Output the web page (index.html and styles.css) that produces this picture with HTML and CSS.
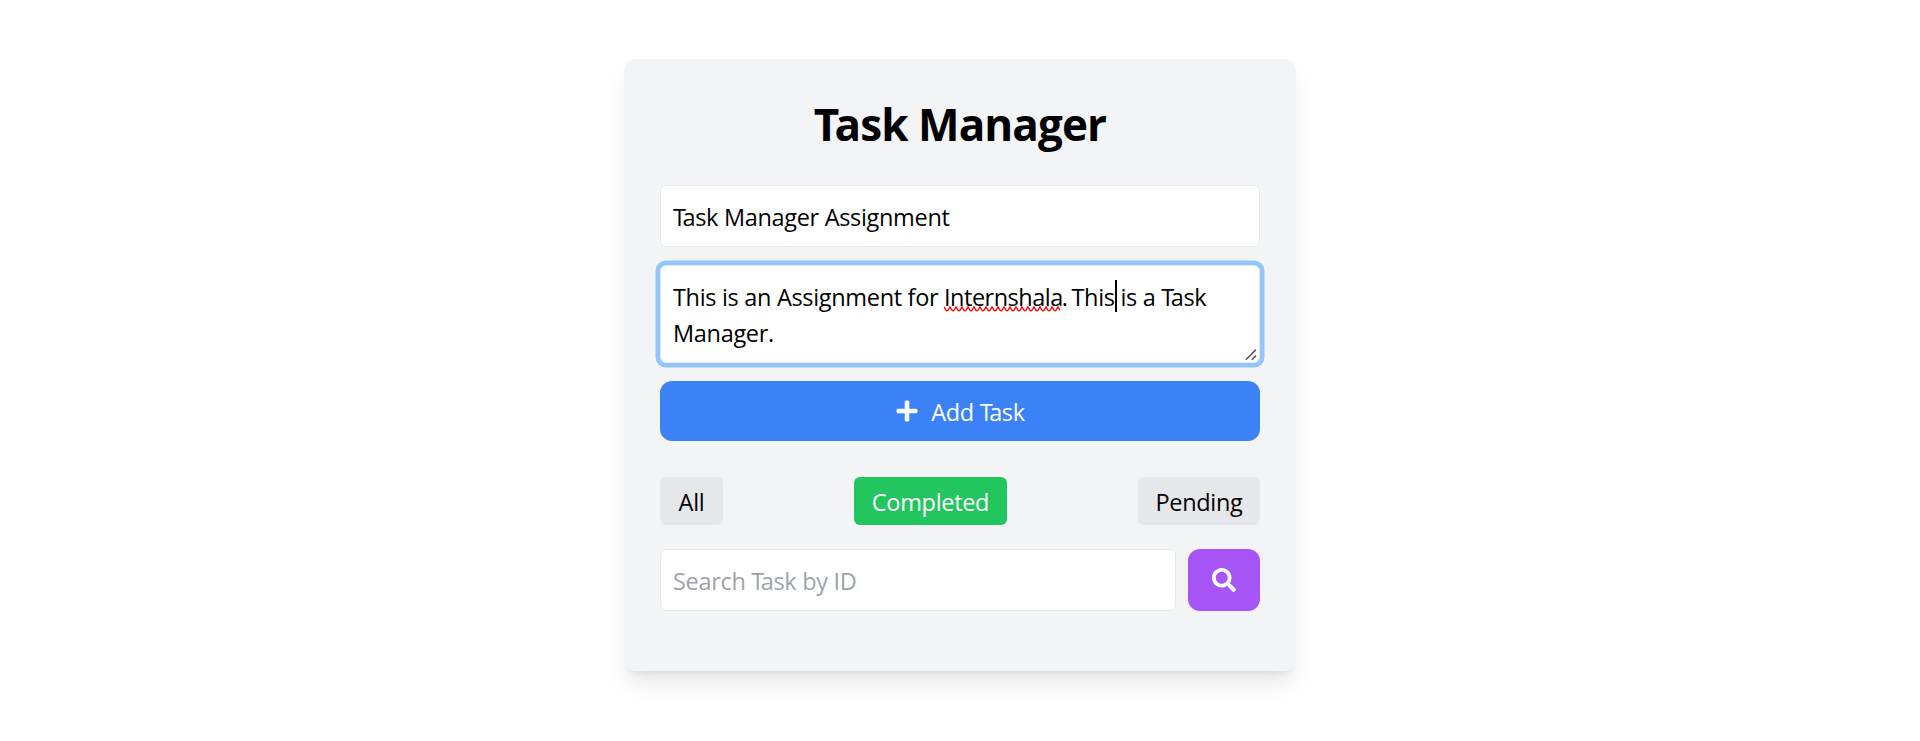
FILE: index.html
```html
<!DOCTYPE html>
<html lang="en">
<head>
<meta charset="utf-8">
<title>Task Manager</title>
<link rel="stylesheet" href="styles.css">
</head>
<body>
<main class="card">
  <h1 class="title"><span class="word">Task</span> Manager</h1>
  <div class="field name-field"><span class="word">Task</span> Manager Assignment</div>
  <div class="field description">
    <div class="line"><span>This is an Assignment for </span><span class="misspelled">Internshala<svg class="squiggle" width="117" height="6" viewBox="0 0 117 6"><path d="M0 .9L2 4.3Q3 5.3 4 4.3L6 .9L8 4.3Q9 5.3 10 4.3L12 .9L14 4.3Q15 5.3 16 4.3L18 .9L20 4.3Q21 5.3 22 4.3L24 .9L26 4.3Q27 5.3 28 4.3L30 .9L32 4.3Q33 5.3 34 4.3L36 .9L38 4.3Q39 5.3 40 4.3L42 .9L44 4.3Q45 5.3 46 4.3L48 .9L50 4.3Q51 5.3 52 4.3L54 .9L56 4.3Q57 5.3 58 4.3L60 .9L62 4.3Q63 5.3 64 4.3L66 .9L68 4.3Q69 5.3 70 4.3L72 .9L74 4.3Q75 5.3 76 4.3L78 .9L80 4.3Q81 5.3 82 4.3L84 .9L86 4.3Q87 5.3 88 4.3L90 .9L92 4.3Q93 5.3 94 4.3L96 .9L98 4.3Q99 5.3 100 4.3L102 .9L104 4.3Q105 5.3 106 4.3L108 .9L110 4.3Q111 5.3 112 4.3L114 .9L116 4.3" fill="none" stroke="#f00" stroke-width="1.3"/></svg></span><span class="sentence">. This</span><span class="caret"></span><span> is a <span class="word">Task</span></span></div>
    <div class="line">Manager.</div>
    <svg class="grip" width="12" height="12" viewBox="0 0 12 12"><path d="M.8 10.8L11 .6M6.8 10.8L11 6.6" fill="none" stroke="#555" stroke-width="1.5"/></svg>
  </div>
  <button class="add">
    <svg class="icon" viewBox="0 0 448 512"><path d="M416 208H272V64c0-17.67-14.33-32-32-32h-32c-17.67 0-32 14.33-32 32v144H32c-17.67 0-32 14.33-32 32v32c0 17.67 14.33 32 32 32h144v144c0 17.67 14.33 32 32 32h32c17.67 0 32-14.33 32-32V304h144c17.67 0 32-14.33 32-32v-32c0-17.67-14.33-32-32-32z"/></svg>
    <span class="add-label">Add <span class="word">Task</span></span>
  </button>
  <div class="filters">
    <button class="filter all">All</button>
    <button class="filter completed">Completed</button>
    <button class="filter pending">Pending</button>
  </div>
  <div class="search">
    <div class="field search-field">Search <span class="word">Task</span> by ID</div>
    <button class="search-button" aria-label="Search">
      <svg class="icon" viewBox="0 0 512 512"><path d="M505 442.7L405.3 343c-4.5-4.5-10.6-7-17-7H372c27.6-35.3 44-79.7 44-128C416 93.1 322.9 0 208 0S0 93.1 0 208s93.1 208 208 208c48.3 0 92.7-16.4 128-44v16.3c0 6.4 2.5 12.5 7 17l99.7 99.7c9.4 9.4 24.6 9.4 33.9 0l28.3-28.3c9.4-9.4 9.4-24.6.1-34zM208 336c-70.7 0-128-57.2-128-128 0-70.7 57.2-128 128-128 70.7 0 128 57.2 128 128 0 70.7-57.2 128-128 128z"/></svg>
    </button>
  </div>
</main>
</body>
</html>
```
FILE: styles.css
```css
* { box-sizing: border-box; }
body {
  margin: 0;
  height: 741px;
  padding-top: 59px;
  background: #fff;
  color: #000;
  font: 23.5px/36px "Open Sans", "Noto Sans", sans-serif;
  letter-spacing: -0.32px;
}
button {
  border: 0;
  margin: 0;
  color: inherit;
  font: inherit;
  letter-spacing: inherit;
}
.card {
  width: 672px;
  height: 612px;
  margin: 0 auto;
  padding: 36px;
  border-radius: 12px;
  background: #f3f4f6;
  box-shadow: 0 15px 22.5px -4.5px rgba(0, 0, 0, .1), 0 6px 9px -6px rgba(0, 0, 0, .1);
}
.title {
  height: 54px;
  margin: 0 0 36px;
  padding-top: 2px;
  font-size: 44px;
  line-height: 54px;
  font-weight: 700;
  letter-spacing: -0.9px;
  text-align: center;
}
.word { display: inline-block; }
.word::first-letter { letter-spacing: -3.5px; }
.title .word::first-letter { letter-spacing: -4.8px; }
.field {
  padding: 13px 12px 11px;
  border: 1px solid #e5e7eb;
  border-radius: 6px;
  background: #fff;
}
.name-field { height: 62px; margin-bottom: 18px; }
.description {
  position: relative;
  height: 98px;
  margin-bottom: 18px;
  box-shadow: 0 0 0 4.5px #93c5fd;
}
.line { height: 36px; white-space: pre; }
.misspelled { position: relative; letter-spacing: -0.5px; }
.sentence { margin-left: -1px; word-spacing: -2px; }
.squiggle { position: absolute; left: 0; bottom: 1px; }
.caret {
  display: inline-block;
  width: 2px;
  height: 32px;
  margin-right: -2px;
  background: #000;
  vertical-align: -6px;
}
.grip { position: absolute; right: 2px; bottom: 1px; }
.add {
  display: flex;
  align-items: center;
  justify-content: center;
  gap: 12px;
  width: 100%;
  height: 60px;
  margin-bottom: 36px;
  border-radius: 12px;
  background: #3b82f6;
  color: #fff;
}
.add-label { padding-top: 2px; }
.icon { width: 24px; height: 24px; fill: currentColor; }
.filters { display: flex; justify-content: space-between; margin-bottom: 24px; }
.filter {
  height: 48px;
  padding: 7px 0 5px;
  border-radius: 6px;
  background: #e5e7eb;
}
.all { width: 63px; }
.completed { width: 153px; background: #22c55e; color: #fff; }
.pending { width: 122px; }
.search { display: flex; gap: 12px; }
.search-field { flex: 1; height: 62px; color: #9ca3af; }
.search-button {
  display: flex;
  justify-content: center;
  width: 72px;
  height: 62px;
  padding: 19px 0;
  border-radius: 12px;
  background: #a855f7;
  color: #fff;
}
```
